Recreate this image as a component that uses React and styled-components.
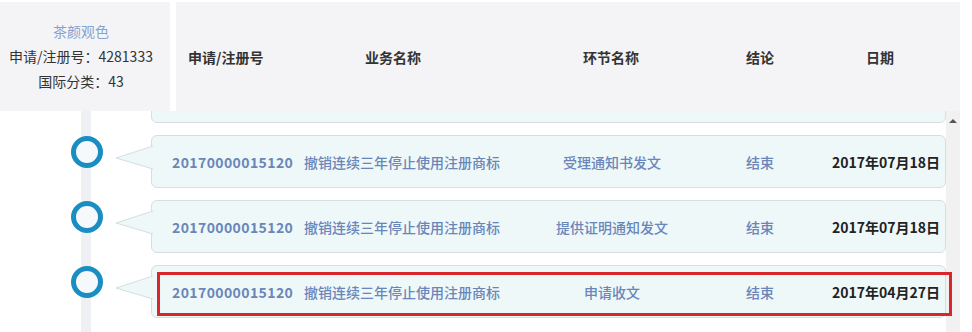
import styled, { createGlobalStyle } from 'styled-components';

const Global = createGlobalStyle`
  body {
    margin: 0;
    background: #fff;
    font-family: "Noto Sans CJK SC", "Noto Sans", sans-serif;
  }
`;

const Page = styled.div`
  width: 960px;
  height: 332px;
  overflow: hidden;
  display: flex;
  flex-direction: column;
`;

const Top = styled.div`
  display: flex;
  gap: 6px;
  padding-top: 2px;
  height: 109px;
  flex-shrink: 0;
`;

const Info = styled.div`
  width: 170px;
  padding-right: 8px;
  box-sizing: border-box;
  background: #f4f4f6;
  display: flex;
  flex-direction: column;
  align-items: center;
  justify-content: center;
  font-size: 14px;
  line-height: 25px;
  color: #333;
`;

const Brand = styled.div`
  color: #86a2d2;
`;

const HeaderBar = styled.div`
  flex: 1;
  background: #f4f4f6;
  display: grid;
  grid-template-columns: 108px 218px 218px 80px 160px;
  align-items: center;
  font-size: 14px;
  font-weight: bold;
  color: #333;
`;

const HeadCell = styled.div`
  text-align: ${p => (p.$left ? 'left' : 'center')};
  padding-left: ${p => (p.$left ? '12px' : '0')};
  white-space: nowrap;
`;

const Body = styled.div`
  flex: 1;
  min-height: 0;
  display: flex;
`;

const List = styled.div`
  flex: 1;
  overflow-x: visible;
  overflow-y: clip;
  background: linear-gradient(
    to right,
    transparent 81px,
    #eef0f3 81px,
    #eef0f3 91px,
    transparent 91px
  );
`;

const Rows = styled.div`
  display: flex;
  flex-direction: column;
  gap: 12px;
  margin-top: -41px;
`;

const Row = styled.div`
  display: flex;
  height: 53px;
`;

const Marker = styled.div`
  width: 151px;
  flex-shrink: 0;
  display: flex;
  align-items: flex-start;
  padding: 1px 0 0 71px;
  box-sizing: border-box;
`;

const Dot = styled.div`
  width: 32px;
  height: 32px;
  box-sizing: border-box;
  border: 5px solid #1a8ec2;
  border-radius: 50%;
  background: #f5f9fb;
`;

const Card = styled.div`
  flex: 1;
  position: relative;
  box-sizing: border-box;
  border: 1px solid #d3dfe2;
  border-radius: 6px;
  background: #eef8f9;
  padding-left: 20px;
  display: grid;
  grid-template-columns: 132px 227px 162px 134px 118px;
  align-items: center;
  font-size: 14px;
  font-weight: 500;
  color: #6a86b9;

  ${p =>
    p.$marked &&
    `
    &::after {
      content: "";
      position: absolute;
      top: 6px;
      bottom: 1px;
      left: 5px;
      right: -7px;
      border: 3px solid #d8262c;
      z-index: 2;
    }
  `}
`;

const Pointer = styled.svg`
  position: absolute;
  left: -37px;
  top: 9px;
  width: 38px;
  height: 26px;
  overflow: visible;
`;

const Num = styled.div`
  font-weight: bold;
  letter-spacing: 0.4px;
  white-space: nowrap;
`;

const Name = styled.div`
  white-space: nowrap;
`;

const Mid = styled.div`
  text-align: center;
  white-space: nowrap;
`;

const Day = styled.div`
  text-align: center;
  font-weight: bold;
  color: #222;
  white-space: nowrap;
`;

const Track = styled.div`
  width: 16px;
  background: #f1f1f1;
  display: flex;
  justify-content: center;
  padding-top: 8px;
  box-sizing: border-box;
`;

const UpArrow = styled.div`
  width: 0;
  height: 0;
  border-left: 4px solid transparent;
  border-right: 4px solid transparent;
  border-bottom: 4px solid #555;
`;

const rows = [
  { hidden: true },
  { id: '20170000015120', biz: '撤销连续三年停止使用注册商标', step: '受理通知书发文', result: '结束', date: '2017年07月18日' },
  { id: '20170000015120', biz: '撤销连续三年停止使用注册商标', step: '提供证明通知发文', result: '结束', date: '2017年07月18日' },
  { id: '20170000015120', biz: '撤销连续三年停止使用注册商标', step: '申请收文', result: '结束', date: '2017年04月27日', marked: true },
];

export default function App() {
  return (
    <Page>
      <Global />
      <Top>
        <Info>
          <Brand>茶颜观色</Brand>
          <div>申请/注册号：4281333</div>
          <div>国际分类：43</div>
        </Info>
        <HeaderBar>
          <HeadCell $left>申请/注册号</HeadCell>
          <HeadCell>业务名称</HeadCell>
          <HeadCell>环节名称</HeadCell>
          <HeadCell>结论</HeadCell>
          <HeadCell>日期</HeadCell>
        </HeaderBar>
      </Top>
      <Body>
        <List>
          <Rows>
            {rows.map((r, i) => (
              <Row key={i}>
                <Marker>
                  <Dot />
                </Marker>
                <Card $marked={r.marked}>
                  <Pointer viewBox="0 0 38 26">
                    <path d="M38 1 L1 13 L38 24" fill="#eef8f9" stroke="#d3dfe2" strokeWidth="1" />
                  </Pointer>
                  {!r.hidden && (
                    <>
                      <Num>{r.id}</Num>
                      <Name>{r.biz}</Name>
                      <Mid>{r.step}</Mid>
                      <Mid>{r.result}</Mid>
                      <Day>{r.date}</Day>
                    </>
                  )}
                </Card>
              </Row>
            ))}
          </Rows>
        </List>
        <Track>
          <UpArrow />
        </Track>
      </Body>
    </Page>
  );
}
